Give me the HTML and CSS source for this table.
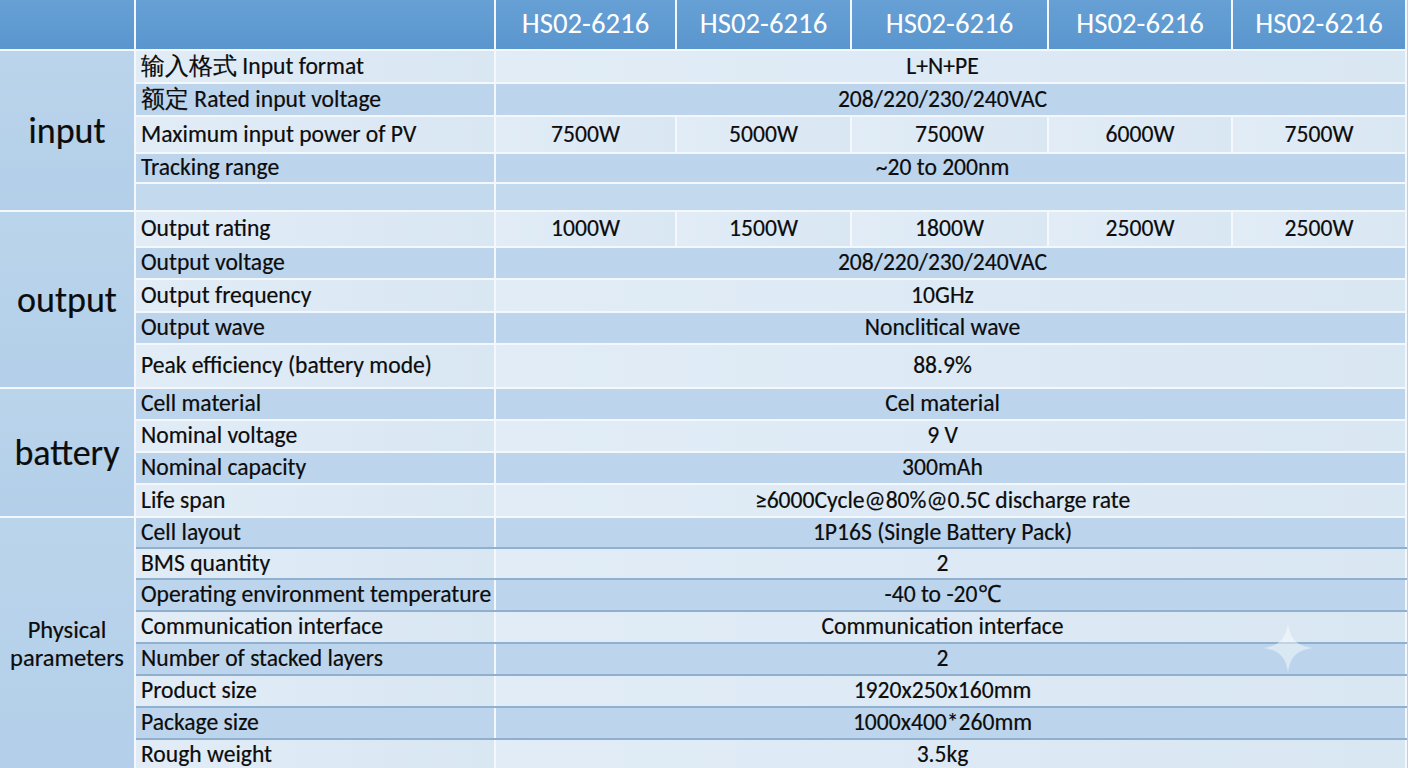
FILE: index.html
```html
<!DOCTYPE html>
<html lang="en">
<head>
<meta charset="utf-8">
<title>HS02-6216 Specifications</title>
<link rel="stylesheet" href="styles.css">
</head>
<body>
<div class="sheet">
<table class="spec">
  <colgroup>
    <col class="c-cat">
    <col class="c-name">
    <col class="c-v1">
    <col class="c-v2">
    <col class="c-v3">
    <col class="c-v4">
    <col class="c-v5">
  </colgroup>
  <thead>
    <tr class="h-head">
      <th></th>
      <th></th>
      <th>HS02-6216</th>
      <th>HS02-6216</th>
      <th>HS02-6216</th>
      <th>HS02-6216</th>
      <th>HS02-6216</th>
    </tr>
  </thead>
  <tbody class="grp">
    <tr class="h33 light">
      <th class="cat cat-lg" rowspan="5">input</th>
      <td class="name">输入格式 Input format</td>
      <td class="val span" colspan="5">L+N+PE</td>
    </tr>
    <tr class="h33 dark">
      <td class="name">额定 Rated input voltage</td>
      <td class="val span" colspan="5">208/220/230/240VAC</td>
    </tr>
    <tr class="h37 light">
      <td class="name">Maximum input power of PV</td>
      <td class="val">7500W</td>
      <td class="val">5000W</td>
      <td class="val">7500W</td>
      <td class="val">6000W</td>
      <td class="val">7500W</td>
    </tr>
    <tr class="h30 dark">
      <td class="name">Tracking range</td>
      <td class="val span" colspan="5">~20 to 200nm</td>
    </tr>
    <tr class="h28 mid">
      <td class="name"></td>
      <td class="val span" colspan="5"></td>
    </tr>
  </tbody>
  <tbody class="grp">
    <tr class="h36 light">
      <th class="cat cat-lg" rowspan="5">output</th>
      <td class="name">Output rating</td>
      <td class="val">1000W</td>
      <td class="val">1500W</td>
      <td class="val">1800W</td>
      <td class="val">2500W</td>
      <td class="val">2500W</td>
    </tr>
    <tr class="h32 dark">
      <td class="name">Output voltage</td>
      <td class="val span" colspan="5">208/220/230/240VAC</td>
    </tr>
    <tr class="h33 light">
      <td class="name">Output frequency</td>
      <td class="val span" colspan="5">10GHz</td>
    </tr>
    <tr class="h32 dark">
      <td class="name">Output wave</td>
      <td class="val span" colspan="5">Nonclitical wave</td>
    </tr>
    <tr class="h44 light">
      <td class="name">Peak efficiency (battery mode)</td>
      <td class="val span" colspan="5">88.9%</td>
    </tr>
  </tbody>
  <tbody class="grp">
    <tr class="h32 dark">
      <th class="cat cat-lg" rowspan="4">battery</th>
      <td class="name">Cell material</td>
      <td class="val span" colspan="5">Cel material</td>
    </tr>
    <tr class="h32 light">
      <td class="name">Nominal voltage</td>
      <td class="val span" colspan="5">9 V</td>
    </tr>
    <tr class="h32 dark">
      <td class="name">Nominal capacity</td>
      <td class="val span" colspan="5">300mAh</td>
    </tr>
    <tr class="h33 light">
      <td class="name">Life span</td>
      <td class="val span" colspan="5">≥6000Cycle@80%@0.5C discharge rate</td>
    </tr>
  </tbody>
  <tbody class="grp phys">
    <tr class="h31 dark">
      <th class="cat cat-sm" rowspan="8"><span class="cat-line">Physical</span><span class="cat-line">parameters</span></th>
      <td class="name">Cell layout</td>
      <td class="val span" colspan="5">1P16S (Single Battery Pack)</td>
    </tr>
    <tr class="h31 light">
      <td class="name">BMS quantity</td>
      <td class="val span" colspan="5">2</td>
    </tr>
    <tr class="h32 dark">
      <td class="name">Operating environment temperature</td>
      <td class="val span" colspan="5">-40 to -20℃</td>
    </tr>
    <tr class="h32 light">
      <td class="name">Communication interface</td>
      <td class="val span" colspan="5">Communication interface</td>
    </tr>
    <tr class="h32 dark">
      <td class="name">Number of stacked layers</td>
      <td class="val span" colspan="5">2</td>
    </tr>
    <tr class="h32 light">
      <td class="name">Product size</td>
      <td class="val span" colspan="5">1920x250x160mm</td>
    </tr>
    <tr class="h32 dark">
      <td class="name">Package size</td>
      <td class="val span" colspan="5">1000x400*260mm</td>
    </tr>
    <tr class="h32 light">
      <td class="name">Rough weight</td>
      <td class="val span" colspan="5">3.5kg</td>
    </tr>
  </tbody>
</table>
<svg class="sparkle" viewBox="0 0 50 50" aria-hidden="true">
  <path d="M25 0 C27 16 34 23 50 25 C34 27 27 34 25 50 C23 34 16 27 0 25 C16 23 23 16 25 0 Z" fill="#ffffff" fill-opacity="0.45"/>
</svg>
</div>
</body>
</html>
```
FILE: styles.css
```css
html, body {
  margin: 0;
  padding: 0;
  background: #b9d2ea;
  overflow: hidden;
}

.sheet {
  position: relative;
  width: 1408px;
  height: 768px;
  overflow: hidden;
}

.spec {
  width: 1406px;
  table-layout: fixed;
  border-collapse: collapse;
  font-family: "Carlito", "Lato", "Liberation Sans", sans-serif;
  font-size: 23.6px;
  color: #0c0c0c;
  -webkit-text-stroke: 0.2px #0c0c0c;
}

.c-cat { width: 135px; }
.c-name { width: 360px; }
.c-v1 { width: 181px; }
.c-v2 { width: 175px; }
.c-v3 { width: 197px; }
.c-v4 { width: 184px; }
.c-v5 { width: 174px; }

.spec th,
.spec td {
  border: 2px solid #f4f8fc;
  padding: 0;
  line-height: 1;
  white-space: nowrap;
  overflow: hidden;
}

.h-head th {
  height: 49px;
  background: linear-gradient(180deg, #66a0d5 0%, #5a96ce 100%);
  color: #ffffff;
  -webkit-text-stroke: 0;
  font-weight: normal;
  font-size: 28.8px;
  text-align: center;
  border-top: 0;
}

.spec tr > :first-child { border-left: 0; }

.cat {
  background: linear-gradient(180deg, #bad4eb 0%, #b3cfe9 100%);
  font-weight: normal;
  text-align: center;
  color: #0c0c0c;
}

.cat-lg { font-size: 36px; }
.cat-sm { font-size: 24.5px; }

.cat-line {
  display: block;
  line-height: 28px;
}

.spec td.name {
  text-align: left;
  padding-left: 5px;
  overflow: visible;
}

.val { text-align: center; }
.spec td.val.span { padding-right: 16px; }

.light > td { background: linear-gradient(90deg, #e1ecf6 0%, #d9e7f3 100%); }
.dark > td { background: #bcd5ec; }
.mid > td { background: #c2d9ee; }

.phys td { border-top-color: #8fb0cf; border-bottom-color: #8fb0cf; }
.phys tr:first-child > td { border-top-color: #f4f8fc; }

.h28 { height: 28px; }
.h30 { height: 30px; }
.h31 { height: 31px; }
.h32 { height: 32px; }
.h33 { height: 33px; }
.h36 { height: 36px; }
.h37 { height: 37px; }
.h44 { height: 44px; }

.sparkle {
  position: absolute;
  left: 1263px;
  top: 623px;
  width: 50px;
  height: 50px;
}
```
